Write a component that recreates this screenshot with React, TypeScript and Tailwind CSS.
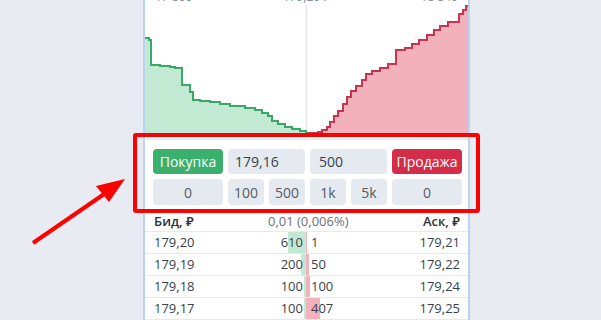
import React from "react";

const font = { fontFamily: '"Open Sans", "Noto Sans", "Liberation Sans", sans-serif' };

// chart points, page coords (x offset 145)
const bidPts: [number, number][] = [
  [145, 38], [149, 38], [149, 40], [151, 40], [151, 65], [160, 65], [160, 66], [170, 66], [170, 67],
  [175, 67], [175, 68], [182, 68], [182, 85], [190, 85], [190, 92], [193, 92], [193, 100], [200, 100],
  [200, 101], [210, 101], [210, 102], [220, 102], [220, 104], [230, 104], [230, 106], [245, 106],
  [245, 108], [255, 108], [255, 110], [262, 110], [262, 113], [268, 113], [268, 116], [272, 116],
  [272, 121], [278, 121], [278, 124], [285, 124], [285, 127], [292, 127], [292, 129], [300, 129],
  [300, 131], [306, 131], [306, 133],
];

const askPts: [number, number][] = [
  [307, 133], [318, 133], [318, 132], [322, 132], [322, 130], [327, 130], [327, 127], [330, 127],
  [330, 122], [334, 122], [334, 116], [338, 116], [338, 111], [343, 111], [343, 104], [347, 104],
  [347, 97], [351, 97], [351, 91], [356, 91], [356, 86], [362, 86], [362, 80], [366, 80], [366, 74],
  [372, 74], [372, 71], [380, 71], [380, 68], [388, 68], [388, 64], [396, 64], [396, 50], [405, 50],
  [405, 48], [412, 48], [412, 44], [419, 44], [419, 40], [427, 40], [427, 35], [434, 35], [434, 30],
  [440, 30], [440, 26], [448, 26], [448, 22], [459, 22], [459, 14], [463, 14], [463, 10], [466, 10],
  [466, 6], [469, 6], [469, 3],
];

const toLine = (pts: [number, number][]) => pts.map(([x, y]) => `${x - 145},${y}`).join(" ");

const rows = [
  { bid: "179,20", bq: "610", bw: 18, aq: "1", aw: 1, ask: "179,21" },
  { bid: "179,19", bq: "200", bw: 5, aq: "50", aw: 3, ask: "179,22" },
  { bid: "179,18", bq: "100", bw: 2, aq: "100", aw: 4, ask: "179,24" },
  { bid: "179,17", bq: "100", bw: 2, aq: "407", aw: 14, ask: "179,25" },
];

function DepthChart() {
  return (
    <div className="relative h-[141px] border-b border-[#e3e8ef]">
      <div className="absolute left-0 right-0 top-[-12px] flex justify-between px-[10px] text-[12px] text-[#8a8f99]">
        <span>17 800</span>
        <span>179,20 ₽</span>
        <span>18 540</span>
      </div>
      <svg width="323" height="136" viewBox="0 0 323 136" className="block">
        <line x1="161.5" y1="5" x2="161.5" y2="136" stroke="#e2e6ec" strokeWidth="1.5" />
        <polygon points={`${toLine(bidPts)} 161,136 0,136`} fill="#c2ead3" />
        <polyline points={toLine(bidPts)} fill="none" stroke="#3aa866" strokeWidth="2" />
        <polygon points={`${toLine(askPts)} 324,136 162,136`} fill="#f3b1bc" />
        <polyline points={toLine(askPts)} fill="none" stroke="#c9344f" strokeWidth="2" />
      </svg>
    </div>
  );
}

function Controls() {
  const chip = "flex h-[26px] items-center justify-center rounded-[4px] bg-[#e5e9f0] text-[#555b65]";
  return (
    <div className="grid grid-cols-[70px_36px_36px_36px_36px_70px] gap-[5px] pl-[8px] pt-[9px] text-[14px]">
      <div className="flex h-[25px] items-center justify-center rounded-[4px] bg-[#3bb06c] text-white">Покупка</div>
      <div className="col-span-2 flex h-[25px] items-center rounded-[4px] bg-[#e5e9f0] pl-[7px] text-[#3a3f47]">179,16</div>
      <div className="col-span-2 flex h-[25px] items-center rounded-[4px] bg-[#e5e9f0] pl-[9px] text-[#3a3f47]">500</div>
      <div className="flex h-[25px] items-center justify-center rounded-[4px] bg-[#d52c4a] text-white">Продажа</div>
      <div className={chip}>0</div>
      <div className={chip}>100</div>
      <div className={chip}>500</div>
      <div className={chip}>1k</div>
      <div className={chip}>5k</div>
      <div className={chip}>0</div>
    </div>
  );
}

function OrderBook() {
  return (
    <div className="mt-[8px] text-[13px] text-[#3a3f47]">
      <div className="flex h-[19px] items-center justify-between border-b border-[#e6eaf0] pl-[9px] pr-[8px]">
        <span className="font-semibold text-[#333]">Бид, ₽</span>
        <span className="text-[#6b717b]">0,01 (0,006%)</span>
        <span className="font-semibold text-[#333]">Аск, ₽</span>
      </div>
      {rows.map((r) => (
        <div key={r.bid} className="flex h-[22px] border-b border-[#e6eaf0]">
          <div className="flex w-[161px] items-center justify-between pl-[9px]">
            <span>{r.bid}</span>
            <span className="relative flex h-full items-center pr-[3px]">
              <span className="absolute right-0 top-0 h-full bg-[#c2ead3]" style={{ width: r.bw }} />
              <span className="relative">{r.bq}</span>
            </span>
          </div>
          <div className="flex flex-1 items-center justify-between pr-[8px]">
            <span className="relative flex h-full items-center pl-[5px]">
              <span className="absolute left-0 top-0 h-full bg-[#f3b1bc]" style={{ width: r.aw }} />
              <span className="relative">{r.aq}</span>
            </span>
            <span>{r.ask}</span>
          </div>
        </div>
      ))}
    </div>
  );
}

export default function App() {
  return (
    <div className="relative flex h-[320px] w-[601px] overflow-hidden bg-[#e8ecf2]" style={font}>
      <div className="w-[143px] shrink-0" />
      <div className="flex h-full w-[327px] shrink-0 flex-col border-x-2 border-[#b9d3f5] bg-white">
        <DepthChart />
        <Controls />
        <OrderBook />
      </div>

      {/* annotation: red frame + arrow */}
      <div className="pointer-events-none absolute left-[133px] top-[133px] h-[80px] w-[347px] rounded-[3px] border-4 border-[#ff0000]" />
      <svg className="pointer-events-none absolute left-0 top-0" width="601" height="320">
        <line x1="33" y1="243" x2="110" y2="190" stroke="#ff0000" strokeWidth="4" />
        <polygon points="125,179 96,186 109,202" fill="#ff0000" />
      </svg>
    </div>
  );
}
